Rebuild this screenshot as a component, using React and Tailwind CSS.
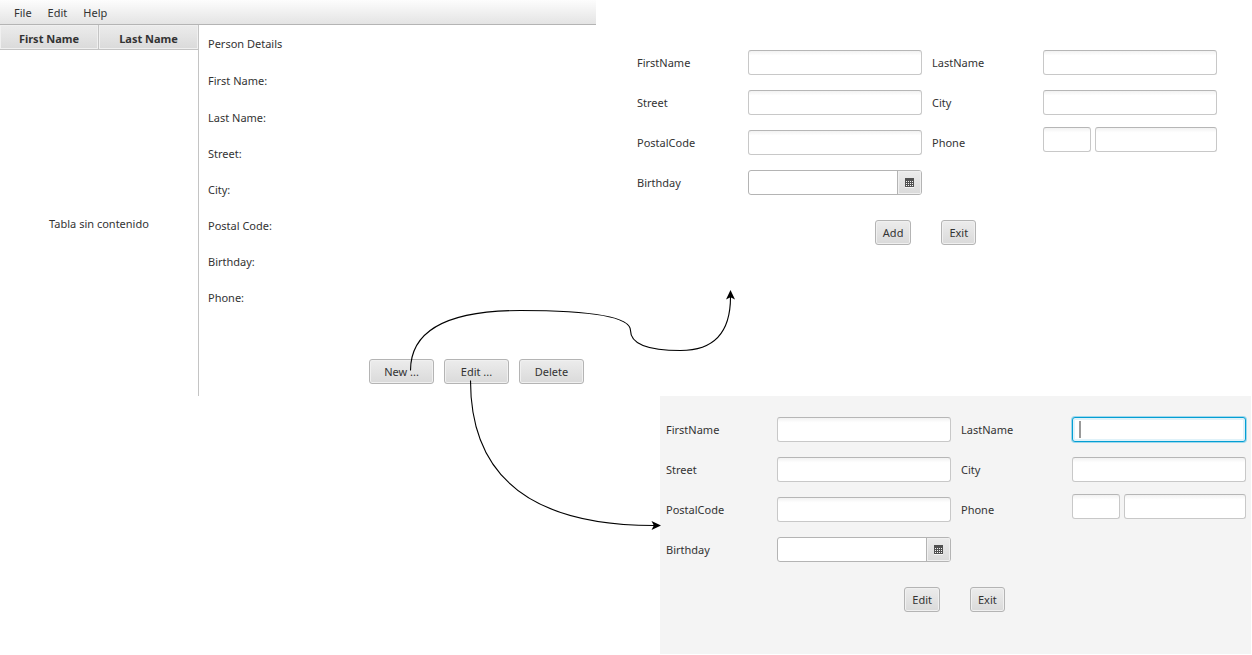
import React, { useId } from "react";

const BUTTON =
  "h-[25px] rounded-[3px] border border-[#b4b4b4] bg-linear-to-b from-[#ececec] to-[#dadada] text-center shadow-[inset_0_0_0_1px_#f0f0f0]";

const FIELD =
  "block h-[25px] w-full min-w-0 rounded-[3px] border border-[#c8c8c8] border-t-[#b6b6b6] bg-white bg-linear-to-b from-[#f2f2f2] via-white via-20% to-white px-[7px] outline-none";

const FOCUSED_FIELD =
  "block h-[25px] w-full min-w-0 rounded-[3px] border border-[#039ed3] bg-white px-[7px] shadow-[0_0_0_1px_#9fd8ec,inset_0_0_0_2px_#e0f2f9] outline-none";

const CELL = "grid grid-cols-[111px_1fr] items-start pt-[7px] leading-[25px]";

const HEADER =
  "border-b border-[#c4c4c4] bg-linear-to-b from-[#ececec] to-[#dadada] p-0 pt-[3px] font-bold shadow-[inset_0_0_0_1px_#f0f0f0]";

function CalendarIcon() {
  const dots = [];
  for (const y of [3, 5, 7]) {
    for (const x of [1, 3, 5, 7]) {
      dots.push(<rect key={`${x}-${y}`} x={x} y={y} width="1" height="1" fill="#f4f4f4" />);
    }
  }
  return (
    <svg width="9" height="10" viewBox="0 0 9 10" shapeRendering="crispEdges" aria-hidden="true">
      <rect width="9" height="9" fill="#515151" />
      <rect y="9" width="9" height="1" fill="#f4f4f4" />
      {dots}
    </svg>
  );
}

function Field({ label, focused = false }) {
  const id = useId();
  return (
    <div className={CELL}>
      <label htmlFor={id}>{label}</label>
      <div className="relative">
        <input id={id} type="text" className={focused ? FOCUSED_FIELD : FIELD} />
        {focused && <span className="absolute top-1 left-[7px] h-[17px] w-0.5 bg-[#999999]" />}
      </div>
    </div>
  );
}

function PhoneField() {
  const id = useId();
  return (
    <div className={CELL}>
      <label htmlFor={id}>Phone</label>
      <div className="-mt-[3px] flex gap-1">
        <div className="w-12 shrink-0">
          <input id={id} type="text" className={FIELD} />
        </div>
        <input type="text" aria-label="Phone number" className={FIELD} />
      </div>
    </div>
  );
}

function DateField() {
  const id = useId();
  return (
    <div className={CELL}>
      <label htmlFor={id}>Birthday</label>
      <div className="flex h-[25px] overflow-hidden rounded-[3px] border border-[#b4b4b4] bg-white">
        <input id={id} type="text" className="min-w-0 flex-1 px-[7px] outline-none" />
        <button
          type="button"
          aria-label="Open calendar"
          className="flex w-6 items-center justify-center border-l border-[#b4b4b4] bg-linear-to-b from-[#ececec] to-[#dadada] shadow-[inset_0_0_0_1px_#f0f0f0]"
        >
          <CalendarIcon />
        </button>
      </div>
    </div>
  );
}

function PersonForm({ action, lastNameFocused = false }) {
  return (
    <form className="w-[580px]" onSubmit={(e) => e.preventDefault()}>
      <div className="grid auto-rows-[40px] grid-cols-2 gap-x-[10px]">
        <Field label="FirstName" />
        <Field label="LastName" focused={lastNameFocused} />
        <Field label="Street" />
        <Field label="City" />
        <Field label="PostalCode" />
        <PhoneField />
        <DateField />
      </div>
      <div className="flex justify-center gap-[30px] pt-[17px] pr-[3px]">
        <button type="submit" className={`${BUTTON} px-[7px]`}>
          {action}
        </button>
        <button type="button" className={`${BUTTON} px-[7px]`}>
          Exit
        </button>
      </div>
    </form>
  );
}

const DETAILS = ["First Name:", "Last Name:", "Street:", "City:", "Postal Code:", "Birthday:", "Phone:"];

function MainWindow() {
  return (
    <section className="flex w-[596px] shrink-0 flex-col">
      <nav className="flex h-[25px] items-center gap-4 border-b border-[#b4b4b4] bg-linear-to-b from-[#fdfdfd] to-[#e4e4e4] px-3.5 pt-0.5">
        <button type="button">File</button>
        <button type="button">Edit</button>
        <button type="button">Help</button>
      </nav>
      <div className="flex">
        <table className="h-[371px] w-[199px] table-fixed border-separate border-spacing-0 border-r border-[#c4c4c4]">
          <thead>
            <tr className="h-[25px]">
              <th className={`${HEADER} border-r`}>First Name</th>
              <th className={HEADER}>Last Name</th>
            </tr>
          </thead>
          <tbody>
            <tr>
              <td colSpan={2} className="p-0 pt-0.5 text-center">
                Tabla sin contenido
              </td>
            </tr>
          </tbody>
        </table>
        <div className="flex flex-1 flex-col justify-between pr-3 pb-3 pl-[9px]">
          <div>
            <h2 className="flex h-[37px] items-center">Person Details</h2>
            <ul>
              {DETAILS.map((name, i) => (
                <li key={name} className={i < 2 ? "flex h-[37px] items-center" : "flex h-9 items-center"}>
                  {name}
                </li>
              ))}
            </ul>
          </div>
          <div className="flex justify-end gap-[10px]">
            <button type="button" className={`${BUTTON} w-[65px]`}>New ...</button>
            <button type="button" className={`${BUTTON} w-[65px]`}>Edit ...</button>
            <button type="button" className={`${BUTTON} w-[65px]`}>Delete</button>
          </div>
        </div>
      </div>
    </section>
  );
}

function Connectors() {
  return (
    <svg
      className="pointer-events-none absolute top-0 left-0"
      width="760"
      height="560"
      viewBox="0 0 760 560"
      fill="none"
      aria-hidden="true"
    >
      <g stroke="#000" strokeWidth="1.1">
        <path d="M410.5 370.5Q410.5 310.5 520.5 310.5Q630.5 310.5 630.5 330.5Q630.5 350.5 680.5 350.5Q730.5 350.5 730.5 297" />
        <path d="M470.5 380.5Q470.5 525.5 654 525.5" />
      </g>
      <path d="M730.5 290L735 299.5L730.5 297.2L726 299.5Z" fill="#000" />
      <path d="M661 525.5L651.5 530L653.8 525.5L651.5 521Z" fill="#000" />
    </svg>
  );
}

export default function App() {
  return (
    <main className="relative min-h-screen bg-white font-['Noto_Sans','Open_Sans',sans-serif] text-[11px] leading-4 text-[#333333]">
      <div className="flex">
        <MainWindow />
        <section className="flex-1 pt-[43px] pl-[41px]">
          <PersonForm action="Add" />
        </section>
      </div>
      <section className="mr-px ml-[660px] h-[258px] bg-[#f4f4f4] pt-[14px] pl-1.5">
        <PersonForm action="Edit" lastNameFocused />
      </section>
      <Connectors />
    </main>
  );
}
